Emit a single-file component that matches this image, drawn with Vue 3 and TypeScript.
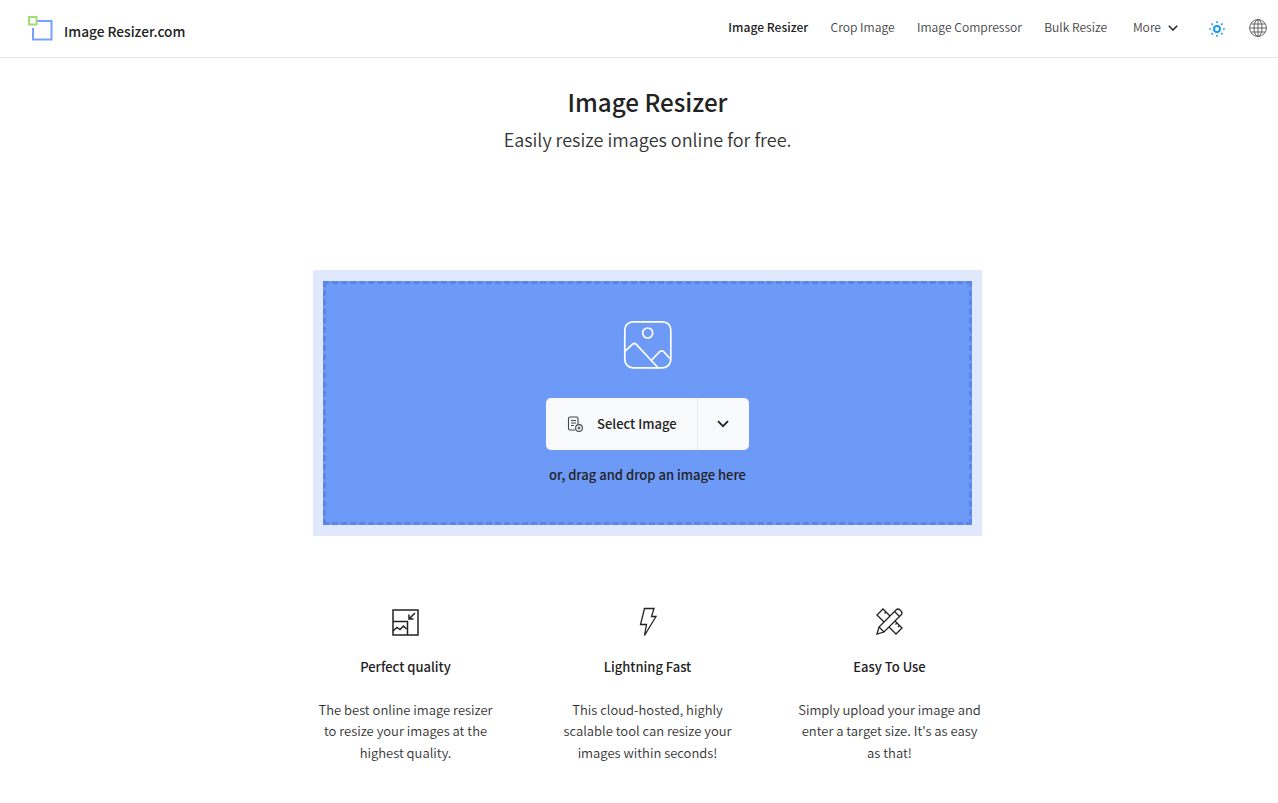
<script setup lang="ts">
const features = [
  { title: 'Perfect quality', lines: ['The best online image resizer', 'to resize your images at the', 'highest quality.'] },
  { title: 'Lightning Fast', lines: ['This cloud-hosted, highly', 'scalable tool can resize your', 'images within seconds!'] },
  { title: 'Easy To Use', lines: ['Simply upload your image and', "enter a target size. It's as easy", 'as that!'] },
]
</script>

<template>
  <div class="page">
    <header class="header">
      <a class="brand">
        <svg class="logo" width="25" height="25" viewBox="0 0 25 25" fill="none">
          <path d="M6 5H23.500V23.500H5V12" stroke="#76a2ff" stroke-width="2" />
          <rect x="1" y="1" width="7.500" height="7.500" fill="#fff" stroke="#a5dc72" stroke-width="2" />
        </svg>
        <span>Image Resizer.com</span>
      </a>
      <nav class="nav">
        <a class="active">Image Resizer</a>
        <a>Crop Image</a>
        <a>Image Compressor</a>
        <a>Bulk Resize</a>
        <a class="more">More
          <svg class="chev" width="10" height="6" viewBox="0 0 10 6" fill="none"><path d="M.8.8 5 5l4.200-4.200" stroke="#222" stroke-width="1.500" /></svg>
        </a>
        <svg class="sun" width="16" height="16" viewBox="0 0 16 16" fill="none">
          <circle cx="8" cy="8" r="3" stroke="#1a9cf0" stroke-width="2" />
          <g stroke="#1a9cf0" stroke-width="1.700" stroke-linecap="round">
            <path d="M8 .9v.4M8 14.700v.4M.9 8h.4M14.700 8h.4M3 3l.3.3M12.700 12.700l.3.3M3 13l.3-.3M12.700 3.300l.3-.3" />
          </g>
        </svg>
        <svg class="globe" width="18" height="18" viewBox="0 0 18 18" fill="none" stroke="#555" stroke-width=".9">
          <circle cx="9" cy="9" r="8.400" />
          <ellipse cx="9" cy="9" rx="4" ry="8.400" />
          <path d="M9 .6v16.800M.6 9h16.800M1.800 5h14.400M1.800 13h14.400" />
        </svg>
      </nav>
    </header>

    <main class="main">
      <h1>Image Resizer</h1>
      <p class="sub">Easily resize images online for free.</p>

      <section class="drop-outer">
        <div class="drop">
          <svg class="picture" width="50" height="50" viewBox="0.500 0 50 50" fill="none" stroke="#fff" stroke-width="1.700">
            <rect x="2.300" y="1.800" width="46" height="46" rx="8" />
            <circle cx="25.200" cy="13" r="5" />
            <path d="M2.200 31.700 9.800 24.300q2-1.600 4 0L35.800 48" />
            <path d="M29.200 40 37.200 31.700q2-1.600 4 0L48.300 39.500" />
          </svg>
          <div class="btn">
            <div class="btn-main">
              <svg width="16" height="16" viewBox="0 0 16 16" fill="none" stroke="#444" stroke-width="1.100">
                <path d="M8 14H3q-1.500 0-1.500-1.500V2.500Q1.500 1 3 1h6.500Q11 1 11 2.500V8" />
                <path d="M4 4.500h5M4 7h5M4 9.500h3" />
                <circle cx="12" cy="12" r="3.400" />
                <path d="M10.500 12h3M12 10.500v3" />
              </svg>
              <span>Select Image</span>
            </div>
            <div class="btn-arrow">
              <svg width="12" height="8" viewBox="0 0 12 8" fill="none"><path d="M1 1.200 6 6.200l5-5" stroke="#222" stroke-width="1.800" /></svg>
            </div>
          </div>
          <p class="hint">or, drag and drop an image here</p>
        </div>
      </section>

      <section class="features">
        <article v-for="(f, i) in features" :key="f.title" class="feature">
          <div class="icon">
            <svg v-if="i === 0" width="28" height="28" viewBox="1 0 28 28" fill="none" stroke="#222" stroke-width="1.500">
              <rect x="2" y="2" width="25" height="25" />
              <path d="M2 13.500H16.500V27" />
              <path d="M2 23 6 19.500l3 2 3.500-3.500 3 3" />
              <path d="M24 5 18 11M18 6.500V11H22.500" />
            </svg>
            <svg v-else-if="i === 1" width="28" height="30" viewBox="0 0 28 30" fill="none" stroke="#222" stroke-width="1.300">
              <path d="M10.500 1.500H20L17.500 9.500H22L10.500 28.500 12.500 17.500H6.500Z" />
            </svg>
            <svg v-else width="28" height="28" viewBox="0 1 28 28" fill="none" stroke="#222" stroke-width="1.300">
              <path d="M1 27 3 20 20 3q2-2 4 0l1 1q2 2 0 4L8 25Z" />
              <path d="M3 20 8 25M18.500 4.500 23.500 9.500" />
              <path d="M8 15 1 8 7 2 14 9M10 5 8.500 6.500" />
              <path d="M19 14 26 21 20 27 13 20M21 16 19.500 17.500M23.500 18.500 22 20" />
            </svg>
          </div>
          <h2>{{ f.title }}</h2>
          <p v-for="l in f.lines" :key="l">{{ l }}</p>
        </article>
      </section>
    </main>
  </div>
</template>

<style>
html, body { margin: 0; background: #fff; overflow: hidden; }
</style>

<style scoped>
.page {
  width: 1278px;
  height: 803px;
  font-family: "Noto Sans CJK JP", "Noto Sans", sans-serif;
  color: #222;
  overflow: hidden;
}
.header {
  height: 57px;
  border-bottom: 1px solid #e3e5ea;
  display: flex;
  align-items: center;
  justify-content: space-between;
  padding: 0 11px 0 28px;
}
.brand { display: flex; align-items: center; gap: 11px; font-size: 13.700px; font-weight: 500; color: #222; }
.brand span { margin-top: 5px; }
.logo { margin-top: -1px; }
.nav { display: flex; align-items: center; font-size: 12.100px; font-weight: 350; color: #444; }
.nav a { margin-right: 22.300px; margin-top: -4px; }
.nav .active { color: #222; font-weight: 500; }
.nav .more { display: flex; align-items: center; gap: 7px; margin: -4px 0 0 3.500px; }
.chev { margin-top: 2px; }
.sun { margin-left: 31px; margin-top: 1px; }
.globe { margin-left: 24px; margin-top: -1px; }
.main { padding-left: 17px; text-align: center; }
h1 { margin: 0; padding-top: 27px; font-size: 24.200px; line-height: 34px; font-weight: 500; color: #222; }
.sub { margin: 6px 0 0; font-size: 18px; line-height: 29px; font-weight: 350; color: #333; }
.drop-outer {
  width: 649px;
  height: 244px;
  margin: 116px auto 0;
  padding: 11px 10px 11px;
  background: #dfe8fd;
}
.drop {
  height: 100%;
  box-sizing: border-box;
  border: 3px dashed #5c86e3;
  background: #6d99f7;
  display: flex;
  flex-direction: column;
  align-items: center;
  padding-top: 36px;
}
.picture { display: block; }
.btn {
  margin-top: 28px;
  width: 203px;
  height: 52px;
  border-radius: 5px;
  background: #f8f9fb;
  display: flex;
}
.btn-main {
  width: 152px;
  box-sizing: border-box;
  padding-left: 21px;
  border-right: 1px solid #e9ebf0;
  display: flex;
  align-items: center;
  gap: 14px;
  font-size: 13px;
  font-weight: 500;
  color: #222;
}
.btn-main span { margin-top: -2px; }
.btn-arrow { flex: 1; display: flex; align-items: center; justify-content: center; padding-right: 2px; }
.hint { margin: 15px 0 0; font-size: 13px; line-height: 20px; font-weight: 500; color: #222; }
.features {
  width: 669px;
  margin: 70px auto 0;
  display: grid;
  grid-template-columns: repeat(3, 185px);
  justify-content: space-between;
}
.feature { text-align: center; }
.icon { height: 32px; display: flex; align-items: center; justify-content: center; }
h2 { margin: 19px 0 21.700px; font-size: 13px; line-height: 20px; font-weight: 500; color: #222; }
.feature p { margin: 0; font-size: 13px; line-height: 21.500px; font-weight: 350; color: #333; white-space: nowrap; }
</style>
